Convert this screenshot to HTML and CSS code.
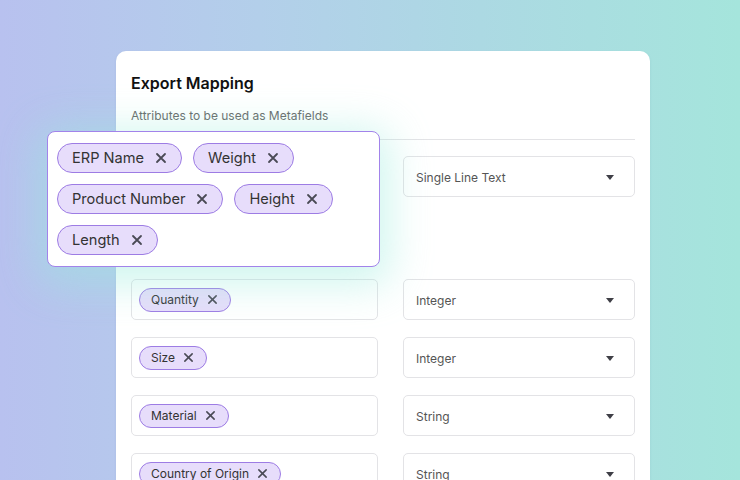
FILE: index.html
```html
<!DOCTYPE html>
<html>
<head>
<meta charset="utf-8">
<link rel="stylesheet" href="styles.css">
</head>
<body>
<div class="card">
  <h1 class="title">Export Mapping</h1>
  <p class="subtitle">Attributes to be used as Metafields</p>
  <div class="rows">
    <div class="row">
      <div class="field field-tall">
        <div class="popover">
          <span class="chip chip-lg">ERP Name<svg class="x" viewBox="0 0 12 12"><path d="M2 2L10 10M10 2L2 10"/></svg></span>
          <span class="chip chip-lg">Weight<svg class="x" viewBox="0 0 12 12"><path d="M2 2L10 10M10 2L2 10"/></svg></span>
          <span class="chip chip-lg">Product Number<svg class="x" viewBox="0 0 12 12"><path d="M2 2L10 10M10 2L2 10"/></svg></span>
          <span class="chip chip-lg">Height<svg class="x" viewBox="0 0 12 12"><path d="M2 2L10 10M10 2L2 10"/></svg></span>
          <span class="chip chip-lg">Length<svg class="x" viewBox="0 0 12 12"><path d="M2 2L10 10M10 2L2 10"/></svg></span>
        </div>
      </div>
      <div class="select">Single Line Text<span class="caret"></span></div>
    </div>
    <div class="row">
      <div class="field"><span class="chip">Quantity<svg class="x" viewBox="0 0 12 12"><path d="M2 2L10 10M10 2L2 10"/></svg></span></div>
      <div class="select">Integer<span class="caret"></span></div>
    </div>
    <div class="row">
      <div class="field"><span class="chip">Size<svg class="x" viewBox="0 0 12 12"><path d="M2 2L10 10M10 2L2 10"/></svg></span></div>
      <div class="select">Integer<span class="caret"></span></div>
    </div>
    <div class="row">
      <div class="field"><span class="chip">Material<svg class="x" viewBox="0 0 12 12"><path d="M2 2L10 10M10 2L2 10"/></svg></span></div>
      <div class="select">String<span class="caret"></span></div>
    </div>
    <div class="row">
      <div class="field"><span class="chip">Country of Origin<svg class="x" viewBox="0 0 12 12"><path d="M2 2L10 10M10 2L2 10"/></svg></span></div>
      <div class="select">String<span class="caret"></span></div>
    </div>
  </div>
</div>
</body>
</html>
```
FILE: styles.css
```css
html, body {
  margin: 0;
  padding: 0;
}
body {
  width: 740px;
  height: 480px;
  overflow: hidden;
  font-family: Inter, "Noto Sans", sans-serif;
  background: linear-gradient(90deg, #b8c1ef 0%, #b3cfea 35%, #acd9e3 65%, #a5e5dc 100%);
}
.card {
  margin: 51px 0 0 116px;
  width: 534px;
  height: 429px;
  box-sizing: border-box;
  background: #fff;
  border-radius: 10px 10px 0 0;
  padding: 21px 15px 0;
  box-shadow: 0 1px 3px rgba(60, 80, 120, 0.08);
}
.title {
  margin: 0;
  font-size: 16px;
  line-height: 22px;
  font-weight: 600;
  color: #111;
}
.subtitle {
  margin: 13px 0 0;
  font-size: 12px;
  line-height: 18px;
  color: #666;
  padding-bottom: 14px;
  border-bottom: 1px solid #e3e3e6;
}
.rows {
  margin-top: 16px;
  display: flex;
  flex-direction: column;
  gap: 17px;
}
.row {
  display: grid;
  grid-template-columns: 247px 232px;
  column-gap: 25px;
  align-items: start;
}
.field {
  position: relative;
  height: 41px;
  box-sizing: border-box;
  border: 1px solid #e3e3e6;
  border-radius: 5px;
  display: flex;
  align-items: center;
  padding-left: 7px;
}
.field-tall {
  height: 106px;
}
.select {
  height: 41px;
  box-sizing: border-box;
  border: 1px solid #e3e3e6;
  border-radius: 5px;
  display: flex;
  align-items: center;
  justify-content: space-between;
  padding: 1px 20px 0 12px;
  font-size: 12px;
  color: #555;
}
.caret {
  width: 0;
  height: 0;
  border-left: 4.5px solid transparent;
  border-right: 4.5px solid transparent;
  border-top: 5px solid #3f3f46;
}
.chip {
  display: inline-flex;
  align-items: center;
  box-sizing: border-box;
  height: 24px;
  padding: 0 12px 0 11px;
  border: 1px solid #9d7ce4;
  background: #e7ddfb;
  border-radius: 12px;
  font-size: 12px;
  color: #333;
  white-space: nowrap;
}
.chip .x {
  width: 11px;
  height: 11px;
  margin-left: 8px;
  fill: none;
  stroke: #4a4a55;
  stroke-width: 1.7;
  stroke-linecap: round;
}
.chip-lg {
  height: 30px;
  border-radius: 15px;
  padding: 0 14px 0 14px;
  font-size: 14.6px;
}
.chip-lg .x {
  width: 12px;
  height: 12px;
  margin-left: 11px;
  stroke-width: 1.8;
}
.popover {
  position: absolute;
  left: -85px;
  top: -26px;
  width: 333px;
  height: 136px;
  box-sizing: border-box;
  background: #fff;
  border: 1.5px solid #a283ea;
  border-radius: 8px;
  padding: 11px 9px;
  display: flex;
  flex-wrap: wrap;
  align-content: flex-start;
  gap: 11px 11px;
  box-shadow: 0 8px 40px 10px rgba(150, 235, 220, 0.45);
  z-index: 2;
}
```
